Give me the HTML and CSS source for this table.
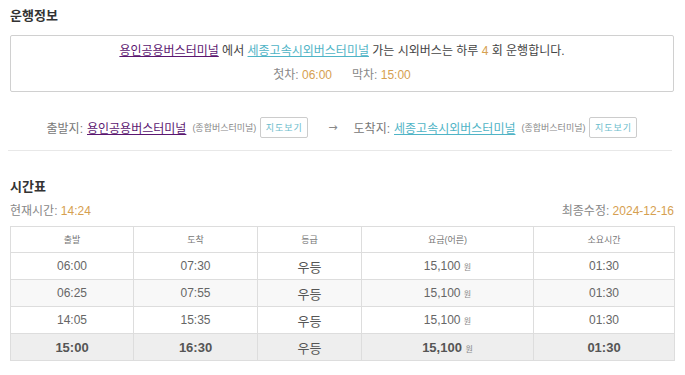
FILE: index.html
```html
<!DOCTYPE html>
<html lang="ko">
<head>
<meta charset="utf-8">
<link rel="stylesheet" href="styles.css">
</head>
<body>
<div class="page">
  <h2 class="title">운행정보</h2>
  <div class="info-box">
    <p class="line1"><a class="link-visited" href="#">용인공용버스터미널</a> 에서 <a class="link-teal" href="#">세종고속시외버스터미널</a> 가는 시외버스는 하루 <span class="num">4</span> 회 운행합니다.</p>
    <p class="line2"><span>첫차: <span class="num">06:00</span></span><span>막차: <span class="num">15:00</span></span></p>
  </div>
  <div class="route">
    <span class="label">출발지:</span>
    <a class="link-visited" href="#">용인공용버스터미널</a>
    <span class="small">(종합버스터미널)</span>
    <span class="btn">지도보기</span>
    <span class="arrow">→</span>
    <span class="label">도착지:</span>
    <a class="link-teal" href="#">세종고속시외버스터미널</a>
    <span class="small">(종합버스터미널)</span>
    <span class="btn">지도보기</span>
  </div>
  <div class="rule"></div>
  <h2 class="title title2">시간표</h2>
  <div class="meta">
    <span>현재시간: <span class="num">14:24</span></span>
    <span>최종수정: <span class="num">2024-12-16</span></span>
  </div>
  <table class="tt">
    <colgroup>
      <col class="c1"><col class="c2"><col class="c3"><col class="c4"><col class="c5">
    </colgroup>
    <thead>
      <tr><th>출발</th><th>도착</th><th>등급</th><th>요금(어른)</th><th>소요시간</th></tr>
    </thead>
    <tbody>
      <tr><td>06:00</td><td>07:30</td><td class="grade">우등</td><td>15,100 <span class="won">원</span></td><td>01:30</td></tr>
      <tr class="alt"><td>06:25</td><td>07:55</td><td class="grade">우등</td><td>15,100 <span class="won">원</span></td><td>01:30</td></tr>
      <tr><td>14:05</td><td>15:35</td><td class="grade">우등</td><td>15,100 <span class="won">원</span></td><td>01:30</td></tr>
      <tr class="last"><td>15:00</td><td>16:30</td><td class="grade">우등</td><td>15,100 <span class="won">원</span></td><td>01:30</td></tr>
    </tbody>
  </table>
</div>
</body>
</html>
```

FILE: styles.css
```css
* { box-sizing: border-box; }
html, body {
  margin: 0;
  padding: 0;
  background: #fff;
}
body {
  font-family: "Liberation Sans", "Noto Sans CJK KR", sans-serif;
  font-size: 12px;
  color: #555;
}
.page {
  width: 685px;
  padding: 6px 11px 0 10px;
}
.title {
  margin: 0;
  font-family: "Noto Sans CJK KR", sans-serif;
  font-size: 13px;
  font-weight: bold;
  color: #333;
  line-height: 18px;
  height: 18px;
}
.info-box {
  margin-top: 11px;
  border: 1px solid #d0d0d0;
  border-radius: 2px;
  height: 57px;
  padding-top: 6px;
  text-align: center;
}
.info-box p { margin: 0; }
.line1 {
  line-height: 18px;
  color: #444;
}
.line2 {
  margin-top: 6px !important;
  line-height: 18px;
  color: #888;
  display: flex;
  justify-content: center;
  gap: 20px;
}
a { text-decoration: underline; }
.link-visited { color: #5b1670; }
.link-teal { color: #4fb4c6; }
.num { color: #d6a050; }
.route {
  display: flex;
  align-items: center;
  justify-content: center;
  height: 22px;
  margin-top: 24px;
  color: #777;
  gap: 4px;
}
.route .small {
  font-size: 9px;
  color: #888;
  margin-left: 2px;
}
.btn {
  display: inline-flex;
  align-items: center;
  justify-content: center;
  height: 21px;
  width: 48px;
  border: 1px solid #ccc;
  border-radius: 2px;
  color: #6bbccc;
  font-size: 9px;
  letter-spacing: 1px;
}
.arrow {
  font-family: "DejaVu Sans", sans-serif;
  font-size: 11px;
  margin: 0 12px 0 16px;
  color: #888;
}
.rule {
  margin: 12px 2px 0 -2px;
  border-top: 1px solid #e8e8e8;
}
.title2 { margin-top: 26px; }
.meta {
  display: flex;
  justify-content: space-between;
  margin-top: 7px;
  line-height: 18px;
  color: #888;
}
.tt {
  margin-top: 6px;
  width: 664px;
  border-collapse: collapse;
  table-layout: fixed;
  color: #666;
}
.c1 { width: 123px; }
.c2 { width: 124px; }
.c3 { width: 104px; }
.c4 { width: 172px; }
.c5 { width: 141px; }
.tt th, .tt td {
  border: 1px solid #ddd;
  text-align: center;
  padding: 0;
}
.tt th {
  height: 26px;
  font-weight: normal;
  font-size: 9px;
  color: #777;
}
.tt td { height: 27px; }
.tt .grade { font-size: 13px; color: #555; }
.won { font-size: 8px; color: #888; }
.tt tr.alt td { background: #f8f8f8; }
.tt tr.last td {
  background: #eeeeee;
  font-weight: bold;
  font-size: 13px;
  color: #555;
}
.tt tr.last td.grade { font-weight: normal; font-size: 13px; }
.tt tr.last .won { font-weight: normal; }
```
